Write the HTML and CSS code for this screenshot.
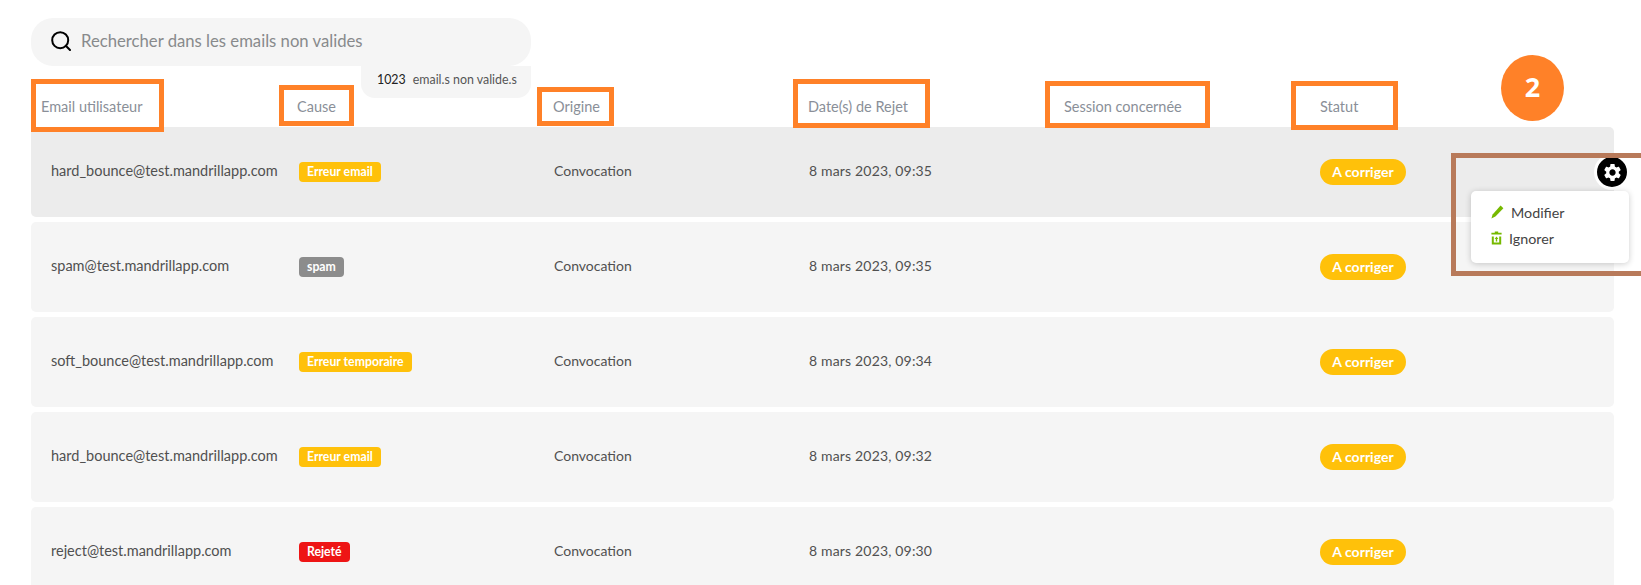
FILE: index.html
```html
<!DOCTYPE html>
<html lang="fr">
<head>
<meta charset="utf-8">
<title>Emails non valides</title>
<link rel="stylesheet" href="styles.css">
</head>
<body>
<main class="page">
  <div class="search-wrap">
    <div class="search">
      <svg class="search-icon" viewBox="0 0 20 20" width="20" height="20" fill="none" stroke="#000" stroke-width="2"><circle cx="9.2" cy="9.2" r="8"/><path d="M14.8 14.8L19 19" stroke-linecap="round"/></svg>
      <span class="placeholder">Rechercher dans les emails non valides</span>
    </div>
    <div class="count"><b>1023</b><span>email.s non valide.s</span></div>
  </div>

  <div class="head">
    <span>Email utilisateur</span>
    <span>Cause</span>
    <span>Origine</span>
    <span>Date(s) de Rejet</span>
    <span>Session concernée</span>
    <span>Statut</span>
  </div>

  <div class="rows">
    <div class="row row-active">
      <span class="email">hard_bounce@test.mandrillapp.com</span>
      <span class="tag"><em class="badge amber">Erreur email</em></span>
      <span class="text">Convocation</span>
      <span class="text date">8 mars 2023, 09:35</span>
      <span></span>
      <span class="tag"><em class="pill">A corriger</em></span>
    </div>
    <div class="row">
      <span class="email">spam@test.mandrillapp.com</span>
      <span class="tag"><em class="badge grey">spam</em></span>
      <span class="text">Convocation</span>
      <span class="text date">8 mars 2023, 09:35</span>
      <span></span>
      <span class="tag"><em class="pill">A corriger</em></span>
    </div>
    <div class="row">
      <span class="email">soft_bounce@test.mandrillapp.com</span>
      <span class="tag"><em class="badge amber">Erreur temporaire</em></span>
      <span class="text">Convocation</span>
      <span class="text date">8 mars 2023, 09:34</span>
      <span></span>
      <span class="tag"><em class="pill">A corriger</em></span>
    </div>
    <div class="row">
      <span class="email">hard_bounce@test.mandrillapp.com</span>
      <span class="tag"><em class="badge amber">Erreur email</em></span>
      <span class="text">Convocation</span>
      <span class="text date">8 mars 2023, 09:32</span>
      <span></span>
      <span class="tag"><em class="pill">A corriger</em></span>
    </div>
    <div class="row">
      <span class="email">reject@test.mandrillapp.com</span>
      <span class="tag"><em class="badge red">Rejeté</em></span>
      <span class="text">Convocation</span>
      <span class="text date">8 mars 2023, 09:30</span>
      <span></span>
      <span class="tag"><em class="pill">A corriger</em></span>
    </div>
  </div>

  <div class="mark mark-email"></div>
  <div class="mark mark-cause"></div>
  <div class="mark mark-origin"></div>
  <div class="mark mark-date"></div>
  <div class="mark mark-session"></div>
  <div class="mark mark-status"></div>
  <div class="step">2</div>

  <div class="gear">
    <svg viewBox="0 0 24 24" width="21" height="21" fill="#fff"><path d="M19.14 12.94c.04-.3.06-.61.06-.94 0-.32-.02-.64-.07-.94l2.03-1.58c.18-.14.23-.41.12-.61l-1.92-3.32c-.12-.22-.37-.29-.59-.22l-2.39.96c-.5-.38-1.03-.7-1.62-.94l-.36-2.54c-.04-.24-.24-.41-.48-.41h-3.84c-.24 0-.43.17-.47.41l-.36 2.54c-.59.24-1.13.57-1.62.94l-2.39-.96c-.22-.08-.47 0-.59.22L2.74 8.87c-.12.21-.08.47.12.61l2.03 1.58c-.05.3-.09.63-.09.94s.02.64.07.94l-2.03 1.58c-.18.14-.23.41-.12.61l1.92 3.32c.12.22.37.29.59.22l2.39-.96c.5.38 1.03.7 1.62.94l.36 2.54c.05.24.24.41.48.41h3.84c.24 0 .44-.17.47-.41l.36-2.54c.59-.24 1.13-.56 1.62-.94l2.39.96c.22.08.47 0 .59-.22l1.92-3.32c.12-.22.07-.47-.12-.61l-2.01-1.58zM12 15.6c-1.98 0-3.6-1.62-3.6-3.6s1.62-3.6 3.6-3.6 3.6 1.62 3.6 3.6-1.62 3.6-3.6 3.6z"/></svg>
  </div>
  <div class="menu">
    <div class="menu-item">
      <svg viewBox="0 0 13 14" width="13" height="14" fill="#76b900"><path d="M9.6 0.6L12.4 3.2 4.4 11.6 0.4 13.6 1.6 9.4z"/></svg>
      <span>Modifier</span>
    </div>
    <div class="menu-item">
      <svg viewBox="0 0 11 14" width="11" height="14" fill="#76b900"><path d="M3.8 0.6h3.4v1.2h3.4v1.6H0.4V1.8h3.4zM0.8 5.4h2v6.2h5.4V5.4h2v8H0.8zM5.5 5.6L7.4 8H6.2v2.4H4.8V8H3.6z"/></svg>
      <span>Ignorer</span>
    </div>
  </div>
  <div class="mark mark-actions"></div>
</main>
</body>
</html>
```

FILE: styles.css
```css
* { box-sizing: border-box; }

html, body {
  margin: 0;
  height: 585px;
  overflow: hidden;
  background: #fff;
}

body {
  font-family: "Lato", "Open Sans", sans-serif;
  font-size: 14px;
  color: #505050;
}

.page {
  position: relative;
  width: 1641px;
  height: 585px;
  padding: 18px 27px 0 31px;
  overflow: hidden;
}

/* search */
.search-wrap {
  position: relative;
  width: 500px;
}

.search {
  display: flex;
  align-items: center;
  gap: 10px;
  height: 48px;
  padding: 0 0 2px 20px;
  background: #f5f5f5;
  border-radius: 22px;
}

.placeholder {
  font-size: 16.7px;
  color: #888a8c;
}

.count {
  position: absolute;
  top: 48px;
  right: 0;
  display: flex;
  align-items: center;
  gap: 7px;
  width: 170px;
  height: 32px;
  padding: 0 0 6px 16px;
  background: #f5f5f5;
  border-radius: 0 0 14px 14px;
  font-size: 12.4px;
  color: #555;
}

.count b {
  font-weight: 400;
  color: #222;
}

/* table */
.head {
  display: grid;
  grid-template-columns: 256px 256px 255px 256px 256px 1fr;
  align-items: center;
  height: 42px;
  margin-top: 19px;
  padding-left: 10px;
  font-size: 14.5px;
  color: #8a8f98;
}

.rows {
  display: flex;
  flex-direction: column;
  gap: 5px;
}

.row {
  display: grid;
  grid-template-columns: 248px 255px 255px 255px 256px 1fr;
  align-items: center;
  flex: none;
  height: 90px;
  padding-left: 20px;
  background: #f5f5f5;
  border-radius: 5px;
  line-height: 1;
}

.row-active {
  background: #ececec;
}

.email,
.text {
  position: relative;
  top: -1px;
}

.email {
  font-size: 14.5px;
}

.date {
  letter-spacing: 0.17px;
}

.tag {
  display: flex;
}

.badge {
  display: inline-block;
  height: 20px;
  padding: 0 8px;
  border-radius: 4px;
  font-style: normal;
  font-weight: 700;
  font-size: 12.25px;
  line-height: 20px;
  color: #fff;
}

.amber { background: #ffc10a; }
.grey { background: #8c8c8c; }
.red { background: #ee1515; }

.pill {
  display: inline-block;
  width: 86px;
  height: 26px;
  border-radius: 13px;
  background: #ffc10a;
  font-style: normal;
  font-weight: 700;
  font-size: 14px;
  line-height: 26px;
  text-align: center;
  color: #fff;
}

/* orange annotations */
.mark {
  position: absolute;
  border: 5px solid #ff8128;
  pointer-events: none;
}

.mark-email { left: 31px; top: 79px; width: 133px; height: 53px; }
.mark-cause { left: 279px; top: 85px; width: 75px; height: 41px; }
.mark-origin { left: 537px; top: 87px; width: 77px; height: 39px; }
.mark-date { left: 793px; top: 79px; width: 137px; height: 49px; }
.mark-session { left: 1045px; top: 81px; width: 165px; height: 47px; }
.mark-status { left: 1291px; top: 81px; width: 107px; height: 49px; }

.mark-actions {
  left: 1451px;
  top: 153px;
  width: 190px;
  height: 123px;
  border-color: #b87a5a;
  border-right-width: 0;
}

.step {
  position: absolute;
  left: 1501px;
  top: 55px;
  width: 63px;
  height: 66px;
  border-radius: 50%;
  background: #ff8128;
  color: #fff;
  font-family: "Open Sans", sans-serif;
  font-weight: 700;
  font-size: 27px;
  line-height: 64px;
  text-align: center;
}

/* row actions */
.gear {
  position: absolute;
  left: 1594px;
  top: 154px;
  display: flex;
  align-items: center;
  justify-content: center;
  width: 36px;
  height: 36px;
  background: #000;
  border: 3px solid #fff;
  border-radius: 50%;
}

.menu {
  position: absolute;
  left: 1471px;
  top: 191px;
  display: flex;
  flex-direction: column;
  width: 158px;
  height: 72px;
  padding: 8px 0 0 20px;
  background: #fff;
  border-radius: 5px;
  box-shadow: 0 1px 6px rgba(0, 0, 0, 0.2);
}

.menu-item {
  display: flex;
  align-items: center;
  gap: 7px;
  height: 26px;
  font-size: 14.3px;
  color: #444;
}
```
